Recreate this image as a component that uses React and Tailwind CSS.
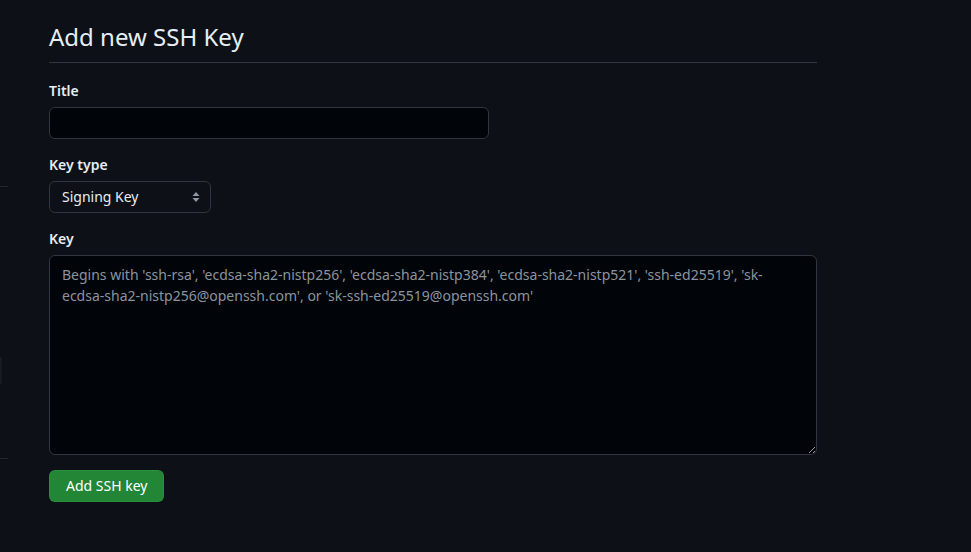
import { useState } from "react";

function SelectArrows() {
  return (
    <svg width="8" height="12" viewBox="0 0 8 12" className="text-[#9198a1]">
      <path d="M4 1 L7.5 5 H0.5 Z" fill="currentColor" />
      <path d="M4 11 L7.5 7 H0.5 Z" fill="currentColor" />
    </svg>
  );
}

export default function App() {
  const [title, setTitle] = useState("");
  const [key, setKey] = useState("");

  return (
    <div
      className="min-h-screen w-full flex bg-[#0d1117] text-[#e6edf3]"
      style={{ fontFamily: '"Noto Sans", "Liberation Sans", sans-serif' }}
    >
      {/* edge of the settings sidebar */}
      <div className="w-[8px] shrink-0 flex flex-col">
        <div className="mt-[186px] h-px bg-[#21262d]" />
        <div className="mt-[170px] ml-0 w-[2px] h-[27px] bg-[#161b22]" />
        <div className="mt-[74px] h-px bg-[#21262d]" />
      </div>

      <div className="ml-[41px] w-[768px] pt-[19px]">
        <div className="pb-[7px] border-b border-[#30363d]">
          <h2 className="text-[24px] leading-[36px] font-normal">Add new SSH Key</h2>
        </div>

        <form onSubmit={(e) => e.preventDefault()}>
          <div className="mt-[16px]">
            <label className="block pt-[1px] text-[14px] leading-[21px] font-semibold mb-[6px]">Title</label>
            <input
              type="text"
              value={title}
              onChange={(e) => setTitle(e.target.value)}
              className="block w-[440px] h-[32px] px-[12px] text-[14px] bg-[#010409] border border-[#30363d] rounded-[6px] outline-none"
            />
          </div>

          <div className="mt-[14px]">
            <label className="block pt-[1px] text-[14px] leading-[21px] font-semibold mb-[6px]">Key type</label>
            <div className="flex items-center justify-between w-[162px] h-[32px] pl-[12px] pr-[10px] text-[14px] bg-[#0d1117] border border-[#30363d] rounded-[6px]">
              <span className="pb-[2px]">Signing Key</span>
              <SelectArrows />
            </div>
          </div>

          <div className="mt-[14px]">
            <label className="block pt-[1px] text-[14px] leading-[21px] font-semibold mb-[6px]">Key</label>
            <textarea
              value={key}
              onChange={(e) => setKey(e.target.value)}
              placeholder="Begins with 'ssh-rsa', 'ecdsa-sha2-nistp256', 'ecdsa-sha2-nistp384', 'ecdsa-sha2-nistp521', 'ssh-ed25519', 'sk-ecdsa-sha2-nistp256@openssh.com', or 'sk-ssh-ed25519@openssh.com'"
              className="block w-full h-[200px] px-[12px] py-[8px] text-[14px] leading-[21px] bg-[#010409] border border-[#30363d] rounded-[6px] outline-none placeholder:text-[#8b949e] [color-scheme:dark]"
            />
          </div>

          <button
            type="submit"
            className="mt-[15px] flex items-center h-[32px] px-[16px] pb-[2px] text-[14px] font-normal text-white bg-[#238636] border border-[#2ea043]/40 rounded-[6px]"
          >
            Add SSH key
          </button>
        </form>
      </div>
    </div>
  );
}
